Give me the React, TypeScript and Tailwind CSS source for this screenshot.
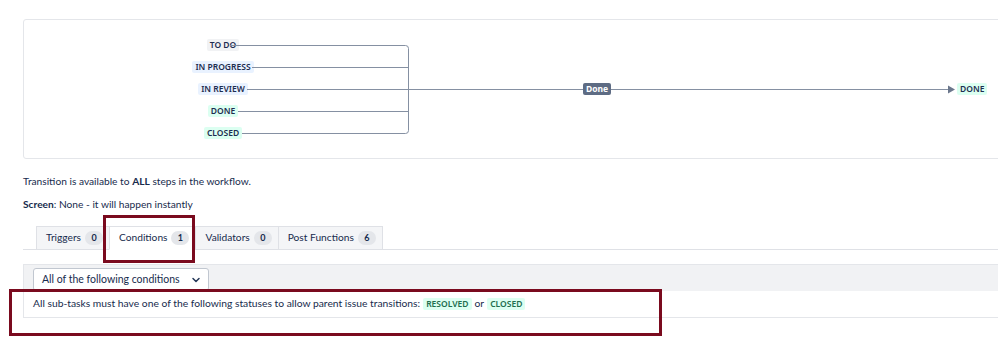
import { ChevronDown } from 'lucide-react'

const font = { fontFamily: 'Lato, "Noto Sans", sans-serif' }
const lozengeFont = { fontFamily: '"Noto Sans", "Open Sans", sans-serif' }

// status lozenges on the diagram, centred on one column
const statuses = [
  { label: 'TO DO', y: 25, cls: 'bg-[#f1f2f4]' },
  { label: 'IN PROGRESS', y: 47, cls: 'bg-[#e9f2ff]' },
  { label: 'IN REVIEW', y: 69, cls: 'bg-[#e9f2ff]' },
  { label: 'DONE', y: 91, cls: 'bg-[#dcfff1]' },
  { label: 'CLOSED', y: 113, cls: 'bg-[#dcfff1]' },
]

const tabs = [
  { name: 'Triggers', count: 0 },
  { name: 'Conditions', count: 1, active: true },
  { name: 'Validators', count: 0 },
  { name: 'Post Functions', count: 6 },
]

function Diagram() {
  return (
    <div className="relative h-[140px] w-[1000px] shrink-0 rounded-[3px] border border-[#e4e6ea] bg-white" style={lozengeFont}>
      {statuses.map((s) => (
        <div
          key={s.label}
          className="absolute flex w-[120px] justify-center"
          style={{ left: 139, top: s.y - 6 }}
        >
          <span
            className={`h-[12px] rounded-[2px] px-[3px] text-[8.5px] font-semibold leading-[12px] text-[#1d2d50] ${s.cls}`}
          >
            {s.label}
          </span>
        </div>
      ))}

      <svg className="absolute left-0 top-0" width="1000" height="140" fill="none">
        <g stroke="#8590a2" strokeWidth="1">
          <path d="M206 25.5 H381.5 Q384.5 25.5 384.5 28.5 V110.5 Q384.5 113.5 381.5 113.5 H218" />
          <path d="M228 47.5 H384.5" />
          <path d="M214 91.5 H384.5" />
          <path d="M223 69.5 H924" />
        </g>
        <path d="M924 65.5 L931 69.5 L924 73.5 Z" fill="#6b778c" />
      </svg>

      <span className="absolute left-[559px] top-[63px] h-[12px] rounded-[2px] bg-[#5e6c84] px-[3px] text-[8.5px] font-bold leading-[12px] text-white">
        Done
      </span>
      <span className="absolute left-[933px] top-[63px] h-[12px] rounded-[2px] bg-[#dcfff1] px-[3px] text-[8.5px] font-semibold leading-[12px] text-[#1d2d50]">
        DONE
      </span>
    </div>
  )
}

export default function App() {
  return (
    <div className="relative h-[351px] w-full overflow-hidden bg-white text-[#172b4d]" style={font}>
      <div className="flex flex-col pl-[23px] pt-[19px]">
        <Diagram />

        <p className="mt-[14px] text-[10.2px] leading-[16px]">
          Transition is available to <span className="font-bold">ALL</span> steps in the workflow.
        </p>
        <p className="mt-[7px] text-[10.2px] leading-[16px]">
          <span className="font-bold">Screen</span>: None - it will happen instantly
        </p>

        {/* Tabs */}
        <div className="mt-[14px] flex border-b border-[#dfe1e6] pl-[14px]">
          {tabs.map((t) => (
            <div
              key={t.name}
              className={`-mb-px -ml-px flex h-[24px] items-center gap-[4px] border border-[#dfe1e6] pl-[9px] pr-[6px] text-[10.2px] ${
                t.active ? 'border-b-white bg-white' : 'bg-[#f4f5f7]'
              }`}
            >
              <span>{t.name}</span>
              <span className="flex h-[14px] min-w-[18px] items-center justify-center rounded-full bg-[#e4e6ea] px-[5px] text-[9px] font-bold">
                {t.count}
              </span>
            </div>
          ))}
        </div>

        {/* Conditions panel */}
        <div className="mt-[14px] w-[1000px] border-l border-t border-[#e4e6ea]">
          <div className="flex h-[26px] items-start bg-[#f1f2f4] pl-[9px] pt-[3px]">
            <div className="flex h-[23px] w-[176px] items-center justify-between rounded-[3px] border border-[#c1c7d0] bg-white pl-[8px] pr-[6px] text-[10.5px]">
              <span>All of the following conditions</span>
              <ChevronDown size={12} strokeWidth={3} className="text-[#253858]" />
            </div>
          </div>
          <div className="flex h-[27px] items-center gap-[3px] border-b border-[#e4e6ea] bg-white pl-[9px] text-[10.3px]">
            <span>All sub-tasks must have one of the following statuses to allow parent issue transitions:</span>
            <span
              className="rounded-[2px] bg-[#dcfff1] px-[3px] text-[8.5px] font-semibold leading-[12px] text-[#216e4e]"
              style={lozengeFont}
            >
              RESOLVED
            </span>
            <span>or</span>
            <span
              className="rounded-[2px] bg-[#dcfff1] px-[3px] text-[8.5px] font-semibold leading-[12px] text-[#216e4e]"
              style={lozengeFont}
            >
              CLOSED
            </span>
          </div>
        </div>
      </div>

      {/* highlight boxes */}
      <div className="pointer-events-none absolute left-[103px] top-[215px] h-[48px] w-[92px] border-[3px] border-[#7a0a1e]" />
      <div className="pointer-events-none absolute left-[9px] top-[289px] h-[47px] w-[653px] border-[3px] border-[#7a0a1e]" />
    </div>
  )
}
